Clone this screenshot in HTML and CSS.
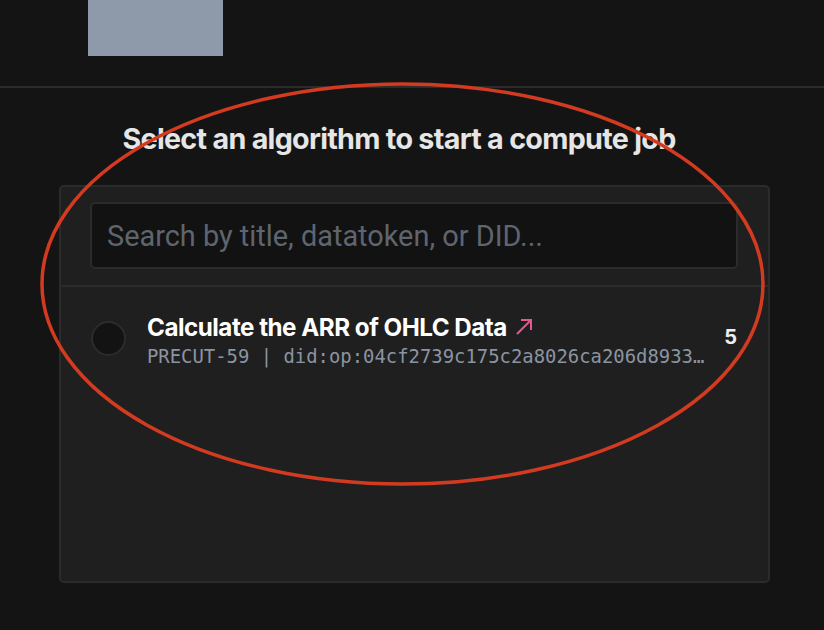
FILE: index.html
```html
<!DOCTYPE html>
<html>
<head>
<meta charset="utf-8">
<link rel="stylesheet" href="styles.css">
</head>
<body>
<header class="topbar">
  <div class="logo-box"></div>
</header>
<main class="content">
  <h2 class="heading">Select an algorithm to start a compute job</h2>
  <section class="panel">
    <div class="search-wrap">
      <input class="search" type="text" placeholder="Search by title, datatoken, or DID...">
    </div>
    <div class="list">
      <div class="row">
        <span class="radio"></span>
        <div class="info">
          <div class="title">Calculate the ARR of OHLC Data <svg class="arrow" width="20" height="20" viewBox="0 0 20 20"><path d="M3 17 L17 3 M7 3 H17 V13" fill="none" stroke="#e5578f" stroke-width="2"/></svg></div>
          <div class="meta">PRECUT-59 | did:op:04cf2739c175c2a8026ca206d8933…</div>
        </div>
        <span class="price">5</span>
      </div>
    </div>
  </section>
</main>
<svg class="annot" width="824" height="630" viewBox="0 0 824 630"><ellipse cx="402.5" cy="284" rx="360.5" ry="200" fill="none" stroke="#d33b20" stroke-width="3.5"/></svg>
</body>
</html>
```
FILE: styles.css
```css
* { box-sizing: border-box; }
html, body { margin: 0; padding: 0; }
body {
  background: #141414;
  width: 824px;
  height: 630px;
  overflow: hidden;
  position: relative;
  font-family: Inter, "Liberation Sans", sans-serif;
  color: #e8e8e8;
}
.topbar {
  height: 88px;
  border-bottom: 2px solid #2c2c2c;
  padding-left: 88px;
}
.logo-box {
  width: 135px;
  height: 56px;
  background: #8e9aa9;
}
.content {
  padding: 0 54px 0 59px;
}
.heading {
  margin: 0;
  padding-top: 34px;
  height: 97px;
  line-height: 34px;
  text-align: center;
  font-size: 28.7px;
  font-weight: 700;
  letter-spacing: -0.7px;
  color: #e6e6e6;
  padding-right: 31px;
}
.panel {
  width: 711px;
  height: 398px;
  background: #1f1f1f;
  border: 2px solid #2b2b2b;
  border-radius: 5px;
}
.search-wrap {
  padding: 15px 30px 16px 29px;
  border-bottom: 2px solid #2b2b2b;
}
.search {
  display: block;
  width: 100%;
  height: 67px;
  background: #121212;
  border: 2px solid #2b2b2b;
  border-radius: 5px;
  padding: 0 15px;
  font-family: Roboto, sans-serif;
  font-size: 28.9px;
  font-weight: 400;
  color: #ddd;
  outline: none;
}
.search::placeholder { color: #5f656e; }
.row {
  display: flex;
  align-items: center;
  padding: 30px 0 0 30px;
}
.radio {
  width: 35px;
  height: 35px;
  border-radius: 50%;
  background: #131313;
  border: 2px solid #2c2c2c;
  flex: none;
  margin-top: -9px;
}
.info {
  margin-left: 21px;
  flex: 1;
  min-width: 0;
}
.title {
  font-size: 24.2px;
  font-weight: 700;
  letter-spacing: -0.5px;
  color: #fff;
  display: flex;
  align-items: center;
  gap: 7px;
  line-height: 26px;
  margin-top: -2px;
}
.arrow { margin-top: -3px; }
.meta {
  font-family: "DejaVu Sans Mono", monospace;
  font-size: 18.9px;
  color: #8b94a1;
  white-space: nowrap;
  line-height: 24px;
  margin-top: 3px;
}
.price {
  font-size: 20px;
  font-weight: 700;
  color: #eee;
  margin-right: 31px;
  margin-top: -11px;
}
.annot {
  position: absolute;
  left: 0;
  top: 0;
  pointer-events: none;
}
```
